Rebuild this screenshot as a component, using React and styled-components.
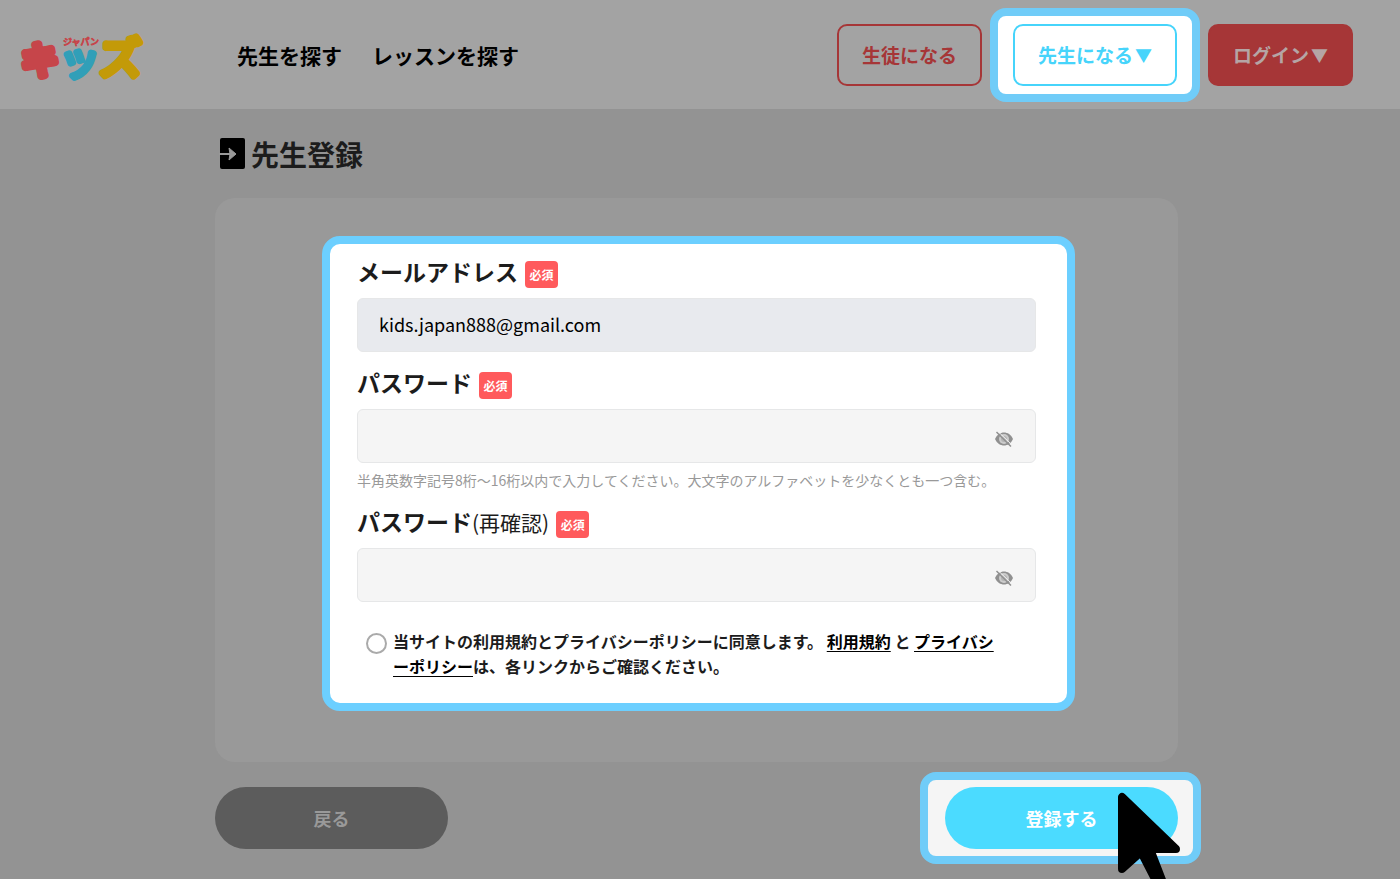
import { useState } from "react";
import styled, { createGlobalStyle } from "styled-components";

export default function App() {
    return (
        <Page lang="ja">
            <GlobalStyle />
            <Header />
            <TeacherRegister />
        </Page>
    );
}

function Header() {
    return (
        <HeaderBar>
            <LogoLink href="#" aria-label="ジャパンキッズ">
                <Logo />
            </LogoLink>
            <Nav>
                <a href="#teachers">先生を探す</a>
                <a href="#lessons">レッスンを探す</a>
            </Nav>
            <HeaderActions>
                <HeaderButton type="button" $color="#a63637">生徒になる</HeaderButton>
                <Spotlight $pad="8px 15px">
                    <HeaderButton type="button" $color="#46d4fb">先生になる<Caret>▼</Caret></HeaderButton>
                </Spotlight>
                <HeaderButton type="button" $color="#a63637" $filled>ログイン<Caret>▼</Caret></HeaderButton>
            </HeaderActions>
        </HeaderBar>
    );
}

function TeacherRegister() {
    const [email, setEmail] = useState("kids.japan888@gmail.com");
    const [password, setPassword] = useState("");
    const [confirm, setConfirm] = useState("");

    return (
        <Main>
            <Title>
                <EnterIcon />
                先生登録
            </Title>
            <Card>
                <FormSpotlight>
                    <Form id="register" onSubmit={(e) => e.preventDefault()}>
                        <Field>
                            <FieldLabel id="email" text="メールアドレス" />
                            <InputBox $filled>
                                <input id="email" type="email" value={email} onChange={(e) => setEmail(e.target.value)} />
                            </InputBox>
                        </Field>
                        <Field>
                            <FieldLabel id="password" text="パスワード" />
                            <PasswordInput id="password" value={password} onChange={setPassword} />
                            <Help>半角英数字記号8桁〜16桁以内で入力してください。大文字のアルファベットを少なくとも一つ含む。</Help>
                        </Field>
                        <Field>
                            <FieldLabel id="confirm" text="パスワード" note="(再確認)" />
                            <PasswordInput id="confirm" value={confirm} onChange={setConfirm} />
                        </Field>
                        <Consent>
                            <input id="consent" type="radio" />
                            <label htmlFor="consent">
                                当サイトの利用規約とプライバシーポリシーに同意します。{" "}
                                <a href="#terms">利用規約</a> と <a href="#privacy">プライバシーポリシー</a>
                                は、各リンクからご確認ください。
                            </label>
                        </Consent>
                    </Form>
                </FormSpotlight>
            </Card>
            <Footer>
                <PillButton type="button" $bg="#5c5c5c" $color="#999999">戻る</PillButton>
                <Spotlight $pad="7px 15px 7px 17px" $bg="#f5f5f5">
                    <PillButton type="submit" form="register" $bg="#4bdbff" $color="#ffffff">登録する</PillButton>
                    <Cursor />
                </Spotlight>
            </Footer>
        </Main>
    );
}

function FieldLabel({ id, text, note }) {
    return (
        <Label htmlFor={id}>
            <span>{text}{note && <small>{note}</small>}</span>
            <Required>必須</Required>
        </Label>
    );
}

function PasswordInput({ id, value, onChange }) {
    const [visible, setVisible] = useState(false);

    return (
        <InputBox>
            <input id={id} type={visible ? "text" : "password"} value={value} onChange={(e) => onChange(e.target.value)} />
            <EyeButton type="button" aria-label="パスワードを表示" onClick={() => setVisible(!visible)}>
                <EyeOffIcon />
            </EyeButton>
        </InputBox>
    );
}

function Logo() {
    return (
        <LogoSvg width="128" height="100" viewBox="0 -22 128 100">
            <text x="1" y="47" fontSize="38" strokeWidth="8" fill="#c6454a" stroke="#c6454a">キ</text>
            <text x="43" y="50" fontSize="34" strokeWidth="6" fill="#319fb8" stroke="#319fb8">ツ</text>
            <text x="79" y="47" fontSize="43" strokeWidth="7" fill="#c39a08" stroke="#c39a08">ズ</text>
            <text x="43" y="18" fontSize="9" strokeWidth="1" fill="#c6454a" stroke="#c6454a">ジャパン</text>
        </LogoSvg>
    );
}

function EnterIcon() {
    return (
        <svg width="26" height="32" viewBox="0 0 26 32">
            <rect x="1" y="0" width="25" height="31" rx="2" fill="#000" />
            <path d="M0 16H14" stroke="#999" strokeWidth="2" />
            <path d="M10 10L17 16L10 22L11 16Z" fill="#999" stroke="#999" strokeWidth="1" />
        </svg>
    );
}

function EyeOffIcon() {
    return (
        <svg width="20" height="18" viewBox="0 0 20 18">
            <path d="M1 9C3 4.500 6.500 2.500 10 2.500S17 4.500 19 9C17 13.500 13.500 15.500 10 15.500S3 13.500 1 9Z" fill="#909090" />
            <circle cx="10" cy="9" r="5" fill="#cccccc" />
            <circle cx="10" cy="9" r="3" fill="#b4b4b4" />
            <path d="M3.500 1L18 15" stroke="#f5f5f5" strokeWidth="1" />
            <path d="M2.500 2L17 16.500" stroke="#909090" strokeWidth="1.500" />
        </svg>
    );
}

function Cursor() {
    return (
        <CursorSvg width="66" height="96" viewBox="0 0 66 96">
            <path d="M5 5V77L24 60L40 91L45 88L33 57H59Z" fill="#000" stroke="#000" strokeWidth="8" strokeLinejoin="round" />
        </CursorSvg>
    );
}

const GlobalStyle = createGlobalStyle`
    * {
        box-sizing: border-box;
    }

    body {
        margin: 0;
        background: #939393;
    }

    body, button, input {
        font-family: "Noto Sans CJK JP", sans-serif;
    }

    button {
        cursor: pointer;
    }
`;

const Page = styled.div`
    min-height: 100vh;
    overflow: hidden;
    color: #1c1c1c;
`;

const HeaderBar = styled.header`
    display: flex;
    align-items: center;
    height: 109px;
    padding: 0 47px 0 20px;
    background: #a3a3a3;
`;

const LogoLink = styled.a`
    display: flex;
    width: 217px;
`;

const LogoSvg = styled.svg`
    font-family: "Noto Sans CJK JP", sans-serif;
    font-weight: 400;
    stroke-linejoin: round;
`;

const Nav = styled.nav`
    display: flex;
    gap: 30px;
    font-size: 21px;
    font-weight: 700;

    a {
        color: #000;
        text-decoration: none;
    }
`;

const HeaderActions = styled.div`
    display: flex;
    align-items: center;
    gap: 8px;
    margin-left: auto;
`;

const HeaderButton = styled.button`
    height: 62px;
    padding: 0 23px;
    border: 2px solid ${({ $color }) => $color};
    border-radius: 10px;
    background: ${({ $filled, $color }) => ($filled ? $color : "transparent")};
    color: ${({ $filled, $color }) => ($filled ? "#b5a5a5" : $color)};
    font-size: 19px;
    font-weight: 700;
    white-space: nowrap;
`;

const Caret = styled.span`
    margin-left: 2px;
    font-size: 17px;
    vertical-align: 1px;
`;

const Spotlight = styled.div`
    position: relative;
    padding: ${({ $pad }) => $pad};
    border: 8px solid #70ccf8;
    border-radius: 16px;
    background: ${({ $bg }) => $bg || "#ffffff"};
`;

const Main = styled.main`
    padding: 24px 199px 0 215px;
`;

const Title = styled.h1`
    display: flex;
    align-items: center;
    gap: 6px;
    margin: 0 4px 23px;
    font-size: 28px;
    line-height: 42px;
`;

const Card = styled.section`
    margin-right: 23px;
    padding: 38px 103px 51px 107px;
    border-radius: 20px;
    background: #999999;
`;

const FormSpotlight = styled(Spotlight)`
    padding: 17px 31px 24px 27px;
    border-color: #6ccfff;
    border-radius: 18px;
`;

const Form = styled.form`
    display: flex;
    flex-direction: column;
    gap: 20px;
`;

const Field = styled.div`
    display: flex;
    flex-direction: column;
`;

const Label = styled.label`
    display: flex;
    gap: 7px;
    height: 27px;
    margin-bottom: 10px;
    font-size: 23px;
    font-weight: 700;
    line-height: 20px;

    small {
        font-size: 21px;
        font-weight: 400;
    }
`;

const Required = styled.span`
    width: 33px;
    height: 27px;
    border-radius: 4px;
    background: #ff5a5c;
    color: #fff;
    font-size: 12px;
    line-height: 27px;
    text-align: center;
`;

const InputBox = styled.div`
    display: flex;
    align-items: center;
    height: 54px;
    padding: 0 21px;
    border: 1px solid #e6e7e8;
    border-radius: 6px;
    background: ${({ $filled }) => ($filled ? "#e8eaee" : "#f5f5f5")};

    input {
        flex: 1;
        min-width: 0;
        padding: 0 0 2px;
        border: 0;
        outline: 0;
        background: transparent;
        color: #000;
        font-size: 18px;
    }
`;

const EyeButton = styled.button`
    display: flex;
    padding: 6px 0 0;
    border: 0;
    background: none;
`;

const Help = styled.p`
    margin: 7px 0 1px;
    color: #999;
    font-size: 14px;
    line-height: 20px;
`;

const Consent = styled.div`
    display: flex;
    align-items: flex-start;
    gap: 6px;
    margin-top: 7px;
    padding: 0 36px 0 9px;
    font-size: 16px;
    font-weight: 700;
    line-height: 25px;

    input {
        flex: none;
        appearance: none;
        width: 21px;
        height: 21px;
        margin: 4px 0 0;
        border: 2px solid #aaa;
        border-radius: 50%;
    }

    input:checked {
        background: #4bdbff;
    }

    label {
        line-break: anywhere;
    }

    a {
        color: #000;
        text-underline-offset: 3px;
    }
`;

const Footer = styled.div`
    display: flex;
    align-items: center;
    justify-content: space-between;
    margin-top: 10px;
`;

const PillButton = styled.button`
    display: block;
    width: 233px;
    height: 62px;
    border: 0;
    border-radius: 31px;
    background: ${({ $bg }) => $bg};
    color: ${({ $color }) => $color};
    font-size: 18px;
    font-weight: 700;
`;

const CursorSvg = styled.svg`
    position: absolute;
    top: 12px;
    right: 10px;
    pointer-events: none;
`;
